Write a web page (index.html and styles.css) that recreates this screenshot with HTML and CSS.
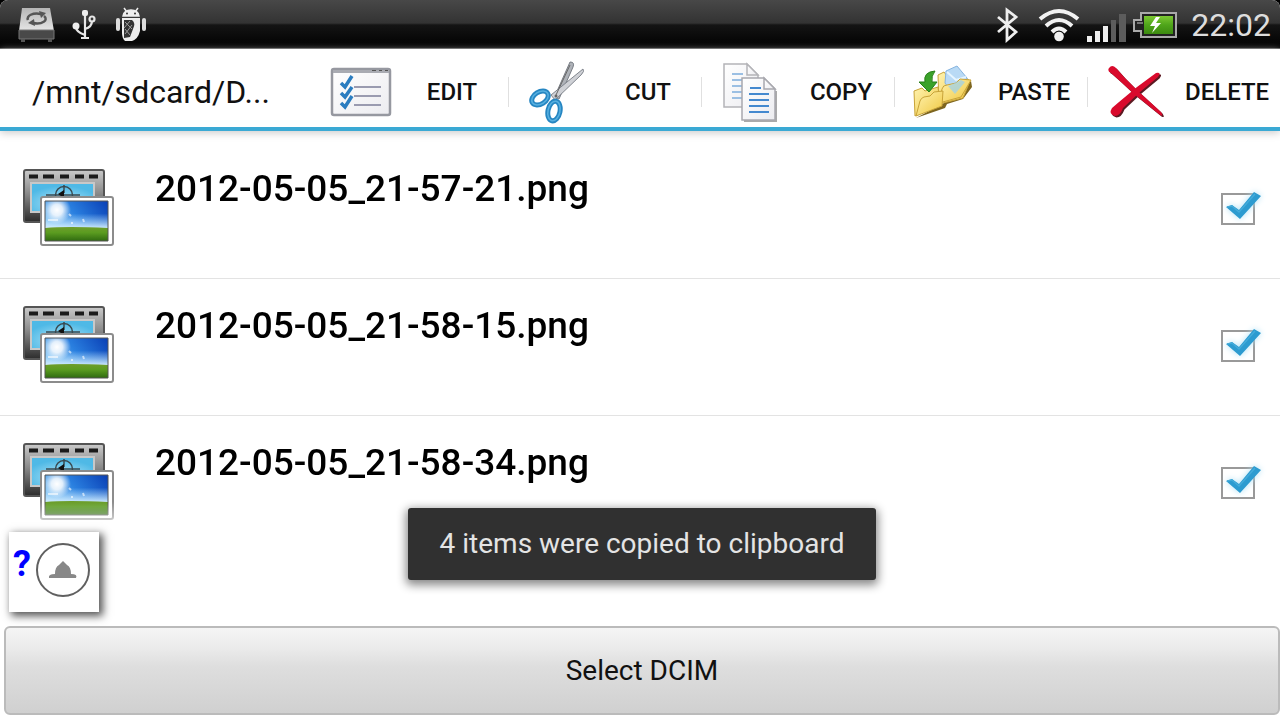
FILE: index.html
```html
<!DOCTYPE html>
<html lang="en">
<head>
<meta charset="utf-8">
<meta name="viewport" content="width=device-width, initial-scale=1">
<title>File manager</title>
<link rel="stylesheet" href="styles.css">
</head>
<body>
<svg class="defs" aria-hidden="true">
  <defs>
    <linearGradient id="frame" x1="0" y1="0" x2="0" y2="1"><stop offset="0" stop-color="#cacaca"/><stop offset=".45" stop-color="#8a8a8a"/><stop offset="1" stop-color="#2c2c2c"/></linearGradient>
    <radialGradient id="screen" cx=".5" cy=".7" r=".6"><stop offset="0" stop-color="#b5e6f8"/><stop offset="1" stop-color="#4fb9e6"/></radialGradient>
    <linearGradient id="sky" x1="0" y1=".5" x2="1" y2="0"><stop offset="0" stop-color="#7cc3f5"/><stop offset=".45" stop-color="#2a80e0"/><stop offset="1" stop-color="#0a3fb5"/></linearGradient>
    <linearGradient id="haze" x1="0" y1="0" x2="0" y2="1"><stop offset=".45" stop-color="#bfe4ff" stop-opacity="0"/><stop offset="1" stop-color="#d8f0ff"/></linearGradient>
    <radialGradient id="sun"><stop offset="0" stop-color="#fff"/><stop offset=".4" stop-color="#fff" stop-opacity=".85"/><stop offset="1" stop-color="#fff" stop-opacity="0"/></radialGradient>
    <linearGradient id="grass" x1="0" y1="0" x2="0" y2="1"><stop offset="0" stop-color="#6f9d2c"/><stop offset=".4" stop-color="#5b9c20"/><stop offset="1" stop-color="#2f6a10"/></linearGradient>
    <linearGradient id="folder" x1="0" y1="0" x2="1" y2="1"><stop offset="0" stop-color="#fff3b0"/><stop offset="1" stop-color="#efc63e"/></linearGradient>
    <linearGradient id="paper" x1="0" y1="0" x2="1" y2="1"><stop offset="0" stop-color="#fff"/><stop offset="1" stop-color="#ececf0"/></linearGradient>
    <linearGradient id="silver" x1="0" y1="0" x2="0" y2="1"><stop offset="0" stop-color="#b5b5b5"/><stop offset="1" stop-color="#e6e6e6"/></linearGradient>
    <linearGradient id="charge" x1="0" y1="0" x2="0" y2="1"><stop offset="0" stop-color="#7cc832"/><stop offset=".5" stop-color="#4fa51a"/><stop offset="1" stop-color="#3c8a10"/></linearGradient>
  </defs>
  <symbol id="media" viewBox="0 0 94 80">
    <rect x="3" y="2" width="80" height="52" rx="2" fill="url(#frame)" stroke="#555" stroke-width="2"/>
    <path d="M8 8.500h9M22 8.500h11M39 8.500h9M54 8.500h9M68 8.500h9" stroke="#1b1b1b" stroke-width="4"/>
    <rect x="10" y="15" width="63" height="29" fill="url(#screen)" stroke="#c8c8c8" stroke-width="2"/>
    <g fill="none" stroke="#3a4a50" stroke-width="1.500"><circle cx="43" cy="27" r="8.500"/><path d="M25 27h34M43 17v8"/></g>
    <path d="M37 26l6-4v8z" fill="#111"/>
    <rect x="20" y="29" width="72" height="48" rx="2" fill="#fff" stroke="#8c8c8c" stroke-width="2"/>
    <rect x="24" y="33" width="63" height="40" fill="url(#sky)"/>
    <rect x="24" y="33" width="63" height="28" fill="url(#haze)"/>
    <circle cx="36" cy="42" r="14" fill="url(#sun)"/>
    <path d="M27 52h10M48 46l2 2M62 51l1 3M50 55h2" stroke="#fff" stroke-width="2" opacity=".6"/>
    <path d="M24 60q22-2 63 0v13H24z" fill="url(#grass)"/>
    <path d="M24 73V33h63v40z" fill="none" stroke="#555" stroke-width="1"/>
  </symbol>
  <symbol id="tick" viewBox="0 0 44 40">
    <path d="M7 18l6-2 7 5L35 3l7 4-21 23z" fill="#2c9bd0"/>
    <path d="M8 18l5-1 7 6L36 5" fill="none" stroke="#43abda" stroke-width="1.500"/>
  </symbol>
</svg>

<header class="status">
  <div class="status-group notices">
    <svg width="38" height="36" viewBox="0 0 38 36"><path d="M4 1h28l4 23H1z" fill="url(#silver)"/><path d="M1 23h35v9H1z" fill="#494949" stroke="#777"/><path d="M3 32h4v3H3zM30 32h4v3h-4z" fill="#555"/><path d="M10 13c-2-4 5-8 13-6M26 9c5 4-2 9-11 7" fill="none" stroke="#555" stroke-width="2.500"/><path d="M21 4l7 2-5 5zM16 12l-6 4 7 3z" fill="#555"/></svg>
    <svg width="24" height="32" viewBox="0 0 24 32"><g fill="none" stroke="#e6e6e6" stroke-width="2.200"><path d="M13 3v25M4 18q0 5 9 8M20 12q0 6-7 8M9 29h8"/><circle cx="20" cy="10" r="2.500"/></g><rect x="10" y="1" width="6" height="6" rx="2" fill="#eee"/><circle cx="4" cy="17" r="3.500" fill="#eee"/></svg>
    <svg width="30" height="36" viewBox="0 0 30 36"><path d="M7 9q1-6 8-6t8 6zM8 1l3 4M22 1l-3 4" fill="#eee" stroke="#eee" stroke-width="1.500"/><rect x="0" y="11" width="4" height="13" rx="2" fill="#ddd"/><rect x="26" y="11" width="4" height="13" rx="2" fill="#ddd"/><path d="M6 11h18v13q-2 8-8 10H9q-3-3-3-8z" fill="#eee"/><path d="M8 13h8q4 3 1 9l-3 8-6 1z" fill="#333"/><path d="M9 15l7 7M14 14l-6 7M9 22l5 6M16 18l-7 9" stroke="#999"/><circle cx="11" cy="6.500" r="1" fill="#333"/><circle cx="19" cy="6.500" r="1" fill="#333"/></svg>
  </div>
  <div class="status-group">
    <svg width="24" height="36" viewBox="0 0 24 36"><path d="M2 10l18 15-9 8V3l9 7L2 25" fill="none" stroke="#eee" stroke-width="2.800"/></svg>
    <svg class="wifi" width="42" height="34" viewBox="0 0 42 34"><g fill="none" stroke="#f2f2f2" stroke-width="4"><path d="M2 11q19-16 38 0M8 18q13-12 26 0M14 24q7-7 14 0"/></g><circle cx="21" cy="28.500" r="4.800" fill="#f2f2f2"/></svg>
    <svg class="signal" width="40" height="30" viewBox="0 0 40 30"><path d="M0 23h5v6H0zM8 18h5v11H8zM16 13h5v16h-5z" fill="#eee"/><path d="M24 7h5v22h-5zM32 1h7v28h-7z" fill="#5c5c5c"/></svg>
    <svg class="battery" width="44" height="26" viewBox="0 0 44 26"><path d="M8 1h35v24H8v-6H1V8h7z" fill="#222" stroke="#aaa" stroke-width="2"/><rect x="11" y="4" width="29" height="18" fill="url(#charge)"/><path d="M4 11h6" stroke="#777" stroke-width="2"/><path d="M23 5l-6 9h5l-3 7 9-10h-5l4-6z" fill="#fff"/></svg>
    <time class="clock">22:02</time>
  </div>
</header>

<nav class="toolbar">
  <div class="path">/mnt/sdcard/D...</div>
  <button class="tool" type="button">
    <span class="tool-icon"><svg width="62" height="50" viewBox="0 0 62 50"><rect x="2" y="2" width="58" height="46" rx="2" fill="url(#paper)" stroke="#9698a0" stroke-width="2.500"/><path d="M3 3h56v3H3z" fill="#a9abb2"/><path d="M42 3.500h4M49 3.500h3M55 3.500h3" stroke="#555"/><path d="M24 20h27M24 29h27M24 38h27" stroke="#9a9bb0" stroke-width="2"/><path d="M11 16l4 4 7-11M11 26l4 4 7-10M11 36l4 4 7-11" fill="none" stroke="#2b7dc0" stroke-width="3.500"/></svg></span>
    <span>EDIT</span>
  </button>
  <button class="tool" type="button">
    <span class="tool-icon"><svg width="58" height="64" viewBox="0 0 58 64"><path d="M42 2q5 0 3 5L31 39l-5-1z" fill="#aeb2b8" stroke="#787d85"/><path d="M55 9q2 2-2 6L27 40l-4-5z" fill="#cfd1d6" stroke="#81868e"/><path d="M42 5L28 35" stroke="#666" stroke-width="1"/><g fill="none" stroke="#2686c2" stroke-width="5"><ellipse cx="12" cy="38" rx="9" ry="6" transform="rotate(-32 12 38)"/><ellipse cx="26" cy="51" rx="6" ry="10" transform="rotate(12 26 51)"/></g><g fill="none" stroke="#57b0e0" stroke-width="1.500"><ellipse cx="12" cy="38" rx="9" ry="6" transform="rotate(-32 12 38)"/><ellipse cx="26" cy="51" rx="6" ry="10" transform="rotate(12 26 51)"/></g><circle cx="28" cy="36" r="1.500" fill="#666"/></svg></span>
    <span>CUT</span>
  </button>
  <button class="tool" type="button">
    <span class="tool-icon"><svg width="56" height="62" viewBox="0 0 56 62"><g stroke="#b4b4b8" stroke-width="1.500" fill="url(#paper)"><path d="M2 3h23l11 11v32H2z"/><path d="M25 3v11h11z"/></g><path d="M10 13h11M10 19h11M10 25h11M10 31h11M10 37h11" stroke="#9bbfe3" stroke-width="1.800"/><path d="M22 60h32V30" fill="none" stroke="#aaa" stroke-width="2"/><g stroke="#a8a8ae" stroke-width="1.500" fill="url(#paper)"><path d="M20 17h22l11 11v31H20z"/><path d="M42 17v11h11z"/></g><path d="M28 27h11M27 33h20M27 39h20M27 45h20M27 51h20" stroke="#4489cf" stroke-width="2"/></svg></span>
    <span>COPY</span>
  </button>
  <button class="tool" type="button">
    <span class="tool-icon"><svg width="62" height="54" viewBox="0 0 62 54"><path d="M4 53L33 43 35 39 51 34 60 22 59 16 43 30 32 38z" fill="#7d651f"/><path d="M26 10l6-3 3 4 13-3 10 8-7 17-24 6z" fill="url(#folder)" stroke="#c8a338"/><path d="M34 6l11-5 10 12-2 10-11 7-9-12z" fill="#b9daf5" stroke="#86b4df"/><path d="M35 7l9 8 10-3" fill="none" stroke="#e6f5ff" stroke-width="2"/><path d="M27 38l3-14q1-4 5-4l9-2 4-4 11 1-10 17z" fill="url(#folder)" stroke="#c8a338"/><path d="M36 21l7-3 6-3 4 2-10 12z" fill="#9fd0e8" opacity=".75"/><path d="M2 26l8-3 3 3 13-4 2 17-25 12z" fill="url(#folder)" stroke="#c8a338"/><path d="M4 51l4-15q1-3 4-4l6-1 4-4 9-1-1 15z" fill="url(#folder)" stroke="#c8a338"/><path d="M23 6q-12 1-10 11H7l10 10 8-10h-5q-1-6 3-11z" fill="#3ba22a" stroke="#278018"/></svg></span>
    <span>PASTE</span>
  </button>
  <button class="tool" type="button">
    <span class="tool-icon"><svg width="56" height="54" viewBox="0 0 56 54"><g transform="translate(1.500 1.500)" fill="#5c1a22"><path d="M1 3Q4-1 8 3l8 9 14 14 23 21q3 5-1 3L26 29 12 16 3 8q-4-2-2-5z"/><path d="M48 8q6-1 2 4L32 27 15 43q-3 8-8 8-7-2-3-8l7-6 18-15z"/></g><g fill="#d90a2c"><path d="M1 3Q4-1 8 3l8 9 14 14 23 21q3 5-1 3L26 29 12 16 3 8q-4-2-2-5z"/><path d="M48 8q6-1 2 4L32 27 15 43q-3 8-8 8-7-2-3-8l7-6 18-15z"/></g></svg></span>
    <span>DELETE</span>
  </button>
</nav>

<main class="files">
  <label class="file"><svg class="thumb"><use href="#media"/></svg><span class="name">2012-05-05_21-57-21.png</span><span class="check"><input type="checkbox" checked><svg><use href="#tick"/></svg></span></label>
  <label class="file"><svg class="thumb"><use href="#media"/></svg><span class="name">2012-05-05_21-58-15.png</span><span class="check"><input type="checkbox" checked><svg><use href="#tick"/></svg></span></label>
  <label class="file"><svg class="thumb"><use href="#media"/></svg><span class="name">2012-05-05_21-58-34.png</span><span class="check"><input type="checkbox" checked><svg><use href="#tick"/></svg></span></label>
</main>

<footer class="footer">
  <button class="help" type="button" aria-label="Help"><span>?</span><svg width="56" height="56" viewBox="0 0 56 56"><circle cx="28" cy="28" r="26" fill="none" stroke="#606060" stroke-width="2"/><path d="M14 36q-1-4 6-4 0-7 4-9l4-4 4 4q4 2 4 9 7 0 5 4z" fill="#888"/></svg></button>
  <button class="select" type="button">Select DCIM</button>
</footer>
<div class="toast" role="status">4 items were copied to clipboard</div>
</body>
</html>
```

FILE: styles.css
```css
* { box-sizing: border-box; }

body {
  margin: 0;
  height: 100vh;
  display: flex;
  flex-direction: column;
  overflow: hidden;
  position: relative;
  background: #fff;
  color: #111;
  font-family: Roboto, "Liberation Sans", sans-serif;
}

button {
  font: inherit;
  color: inherit;
  border: 0;
  padding: 0;
  background: none;
}

svg { display: block; }

.defs { position: absolute; width: 0; height: 0; }

.status {
  flex: none;
  height: 49px;
  display: flex;
  justify-content: space-between;
  align-items: center;
  padding: 2px 9px 0 18px;
  background: linear-gradient(#484848, #333 48%, #141414 52%, #000);
  border-bottom: 1px solid #555;
  border-radius: 8px 8px 0 0;
  box-shadow: 0 -8px 0 8px #000;
}

.status-group { display: flex; align-items: center; }
.notices { gap: 16px; }
.notices svg:last-child { margin-left: 4px; }
.wifi { margin-left: 18px; }
.signal { margin: 6px 6px 0 7px; }
.clock {
  margin-left: 14px;
  font-size: 32px;
  line-height: 40px;
  color: #ddd;
}

.toolbar {
  flex: none;
  position: relative;
  display: grid;
  grid-template-columns: 312fr 196fr repeat(4, 193fr);
  align-items: center;
  height: 82px;
  padding-top: 7px;
  background: #fff;
  border-bottom: 4px solid #3aa9d4;
  box-shadow: 0 2px 8px #ccc;
}

.path { padding-left: 32px; font-size: 32px; white-space: nowrap; }

.tool {
  display: grid;
  grid-template-columns: 98px 84px;
  align-items: center;
  height: 64px;
  font-size: 24px;
  font-weight: 500;
}
.tool-icon { display: grid; place-items: center; }
.tool + .tool {
  background: linear-gradient(#e0e0e0, #e0e0e0) left center / 1px 30px no-repeat;
}

.files {
  flex: 1;
  min-height: 0;
  overflow: hidden;
  padding-top: 11px;
  mask-image: linear-gradient(#000 calc(100% - 20px), rgba(0, 0, 0, .4));
}

.file {
  display: grid;
  grid-template-columns: 94px 1fr 44px;
  column-gap: 40px;
  align-items: start;
  height: 137px;
  padding: 26px 17px 0 21px;
  border-bottom: 1px solid #e3e3e3;
}

.thumb { width: 94px; height: 80px; }
.name { font-size: 37px; line-height: 42px; font-weight: 500; color: #000; }

.check { display: grid; margin-top: 21px; }
.check > * { grid-area: 1 / 1; }
.check input {
  appearance: none;
  width: 34px;
  height: 32px;
  margin: 4px 0 0 2px;
  border: 2px solid #999;
  background: #fff;
}
.check svg {
  width: 44px;
  height: 40px;
  pointer-events: none;
  filter: drop-shadow(0 0 3px #aee0f5);
}

.footer {
  flex: none;
  display: flex;
  flex-direction: column;
  align-items: flex-start;
  gap: 14px;
  padding: 10px 0 5px 4px;
}

.help {
  display: flex;
  align-items: center;
  gap: 4px;
  margin-left: 5px;
  width: 90px;
  height: 80px;
  padding: 0 4px;
  background: #fff;
  box-shadow: 3px 3px 8px 1px #555;
}
.help span {
  align-self: flex-start;
  margin-top: 11px;
  font-size: 36px;
  line-height: 42px;
  font-weight: 700;
  color: #00f;
}
.help svg { flex: none; margin-top: -4px; }

.select {
  align-self: stretch;
  height: 89px;
  font-size: 28px;
  border: 2px solid #bbb;
  border-radius: 6px;
  background: linear-gradient(#f5f5f5, #eaeaea 25%, #dedede 45%, #d0d0d0);
}

.toast {
  position: absolute;
  left: 4px;
  right: 0;
  bottom: 140px;
  width: fit-content;
  margin: 0 auto;
  padding: 18px 32px;
  font-size: 28px;
  line-height: 36px;
  white-space: nowrap;
  color: #e4e4e4;
  background: #303030;
  border-radius: 3px;
  box-shadow: 0 3px 10px 2px #888;
}
```
